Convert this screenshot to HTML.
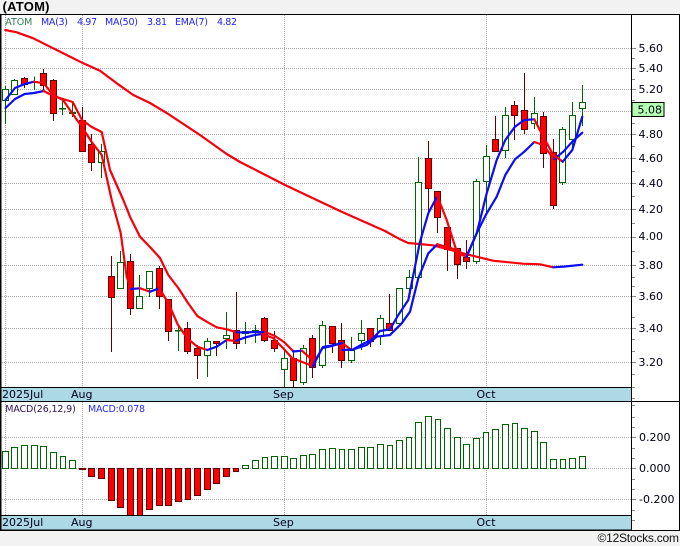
<!DOCTYPE html>
<html><head><meta charset="utf-8"><style>
html,body{margin:0;padding:0;background:#f2f2f2;width:680px;height:546px;overflow:hidden}
svg{display:block}
text{font-family:"DejaVu Sans",sans-serif;font-size:11px;fill:#000018}
.l text{font-size:9.5px}
.g{fill:#fff;stroke:#006400;stroke-width:1}
.d{fill:#006400;stroke:#006400;stroke-width:1}
.r{fill:#f00;stroke:#660000;stroke-width:1}
.red{fill:none;stroke:#f5000c;stroke-width:2.2;stroke-linejoin:round;stroke-linecap:round}
.blu{fill:none;stroke:#0c0cf5;stroke-width:2.2;stroke-linejoin:round;stroke-linecap:round}
.grid{stroke:#a8a8a8;stroke-width:1;stroke-dasharray:1 1;fill:none}
.tick{stroke:#888;stroke-width:1;fill:none}
</style></head><body>
<svg width="680" height="546" viewBox="0 0 680 546" xmlns="http://www.w3.org/2000/svg">
<rect x="0" y="0" width="680" height="546" fill="#f2f2f2"/>
<rect x="0" y="14" width="680" height="516" fill="#fff"/>
<text x="2.5" y="11" textLength="47" style="font-family:'Liberation Sans',sans-serif;font-size:13px;font-weight:bold;fill:#000">(ATOM)</text>

<!-- grid -->
<path class="grid" d="M2 48.5H632M2 68.5H632M2 89.5H632M2 111.5H632M2 134.5H632M2 158.5H632M2 183.5H632M2 209.5H632M2 237.5H632M2 265.5H632M2 296.5H632M2 328.5H632M2 362.5H632M5.5 15V387M82.5 15V387M284.5 15V387M486.5 15V387M2 437.5H632M2 468.5H632M2 499.5H632M5.5 402V515M82.5 402V515M284.5 402V515M486.5 402V515"/>

<!-- candles -->
<path class="g" d="M5.5 86V89.5M5.5 100.5V124M2.5 89.5h6V100.5h-6z"/>
<path class="g" d="M14.5 79V80.5M11.5 80.5h6V94.5h-6z"/>
<path class="r" d="M24.5 77V78.5M24.5 84.5V88M21.5 78.5h6V84.5h-6z"/>
<path class="g" d="M34.5 76.5V81.5M34.5 82.5V90M31.5 81.5h6V82.5h-6z"/>
<path class="r" d="M43.5 69V73.5M43.5 85.5V90M40.5 73.5h6V85.5h-6z"/>
<path class="r" d="M53.5 79V80.5M53.5 113.5V121M50.5 80.5h6V113.5h-6z"/>
<path class="d" d="M62.5 101V108.5M62.5 109V115M59.5 108.5h6V109h-6z"/>
<path class="g" d="M72.5 103V112.5M72.5 113.5V117M69.5 112.5h6V113.5h-6z"/>
<path class="r" d="M82.5 107V120.5M79.5 120.5h6V151.5h-6z"/>
<path class="r" d="M91.5 134V144.5M91.5 162.5V171M88.5 144.5h6V162.5h-6z"/>
<path class="g" d="M101.5 144V151.5M101.5 162.5V178M98.5 151.5h6V162.5h-6z"/>
<path class="r" d="M111.5 256V276.5M111.5 297.5V352M108.5 276.5h6V297.5h-6z"/>
<path class="g" d="M120.5 251V262.5M117.5 262.5h6V288.5h-6z"/>
<path class="r" d="M130.5 254V261.5M130.5 308.5V315M127.5 261.5h6V308.5h-6z"/>
<path class="g" d="M139.5 275V296.5M136.5 296.5h6V308.5h-6z"/>
<path class="g" d="M149.5 288.5V297M146.5 271.5h6V288.5h-6z"/>
<path class="r" d="M159.5 266V268.5M159.5 296.5V309M156.5 268.5h6V296.5h-6z"/>
<path class="r" d="M168.5 331.5V341M165.5 299.5h6V331.5h-6z"/>
<path class="d" d="M178.5 326V330.5M178.5 331V351M175.5 330.5h6V331h-6z"/>
<path class="r" d="M187.5 322V328.5M187.5 351.5V354M184.5 328.5h6V351.5h-6z"/>
<path class="r" d="M197.5 345V348.5M197.5 355.5V379M194.5 348.5h6V355.5h-6z"/>
<path class="g" d="M207.5 338V341.5M207.5 355.5V377M204.5 341.5h6V355.5h-6z"/>
<path class="r" d="M216.5 343.5V356M213.5 341.5h6V343.5h-6z"/>
<path class="g" d="M226.5 312V335.5M226.5 338.5V349M223.5 335.5h6V338.5h-6z"/>
<path class="r" d="M236.5 292V330.5M236.5 343.5V349M233.5 330.5h6V343.5h-6z"/>
<path class="g" d="M245.5 322V331.5M245.5 333.5V344M242.5 331.5h6V333.5h-6z"/>
<path class="g" d="M255.5 325V330.5M255.5 332.5V343M252.5 330.5h6V332.5h-6z"/>
<path class="r" d="M264.5 317V318.5M264.5 340.5V342M261.5 318.5h6V340.5h-6z"/>
<path class="r" d="M274.5 331V340.5M274.5 348.5V352M271.5 340.5h6V348.5h-6z"/>
<path class="g" d="M284.5 350V358.5M284.5 369.5V387M281.5 358.5h6V369.5h-6z"/>
<path class="r" d="M293.5 350V358.5M293.5 380.5V388M290.5 358.5h6V380.5h-6z"/>
<path class="g" d="M303.5 345V348.5M303.5 382.5V385M300.5 348.5h6V382.5h-6z"/>
<path class="r" d="M312.5 335V338.5M312.5 367.5V378M309.5 338.5h6V367.5h-6z"/>
<path class="g" d="M322.5 321V325.5M322.5 365.5V368M319.5 325.5h6V365.5h-6z"/>
<path class="r" d="M332.5 343.5V353M329.5 326.5h6V343.5h-6z"/>
<path class="r" d="M341.5 323V340.5M341.5 360.5V368M338.5 340.5h6V360.5h-6z"/>
<path class="g" d="M351.5 337V350.5M351.5 360.5V363M348.5 350.5h6V360.5h-6z"/>
<path class="g" d="M361.5 320V333.5M361.5 340.5V350M358.5 333.5h6V340.5h-6z"/>
<path class="r" d="M370.5 341.5V347M367.5 328.5h6V341.5h-6z"/>
<path class="g" d="M380.5 315V318.5M380.5 336.5V345M377.5 318.5h6V336.5h-6z"/>
<path class="r" d="M389.5 294V323.5M386.5 323.5h6V330.5h-6z"/>
<path class="g" d="M396.5 288.5h6V323.5h-6z"/>
<path class="g" d="M409.5 270V277.5M409.5 288.5V298M406.5 277.5h6V288.5h-6z"/>
<path class="g" d="M418.5 157V182.5M415.5 182.5h6V277.5h-6z"/>
<path class="r" d="M428.5 141V158.5M428.5 188.5V212M425.5 158.5h6V188.5h-6z"/>
<path class="r" d="M437.5 217.5V233M434.5 191.5h6V217.5h-6z"/>
<path class="r" d="M447.5 249.5V271M444.5 227.5h6V249.5h-6z"/>
<path class="r" d="M457.5 264.5V279M454.5 248.5h6V264.5h-6z"/>
<path class="r" d="M466.5 240V257.5M466.5 261.5V269M463.5 257.5h6V261.5h-6z"/>
<path class="g" d="M476.5 179V181.5M476.5 261.5V264M473.5 181.5h6V261.5h-6z"/>
<path class="g" d="M486.5 145V156.5M486.5 181.5V213M483.5 156.5h6V181.5h-6z"/>
<path class="r" d="M495.5 116V139.5M492.5 139.5h6V151.5h-6z"/>
<path class="g" d="M505.5 107V115.5M505.5 150.5V158M502.5 115.5h6V150.5h-6z"/>
<path class="r" d="M514.5 101V105.5M514.5 115.5V140M511.5 105.5h6V115.5h-6z"/>
<path class="r" d="M524.5 73V110.5M524.5 129.5V134M521.5 110.5h6V129.5h-6z"/>
<path class="g" d="M534.5 97V113.5M534.5 123.5V129M531.5 113.5h6V123.5h-6z"/>
<path class="r" d="M543.5 112V116.5M543.5 153.5V168M540.5 116.5h6V153.5h-6z"/>
<path class="r" d="M553.5 139V152.5M553.5 205.5V209M550.5 152.5h6V205.5h-6z"/>
<path class="g" d="M562.5 127V129.5M562.5 182.5V185M559.5 129.5h6V182.5h-6z"/>
<path class="g" d="M572.5 102V115.5M572.5 139.5V150M569.5 115.5h6V139.5h-6z"/>
<path class="g" d="M582.5 85V102.5M582.5 108.5V126M579.5 102.5h6V108.5h-6z"/>

<!-- MA50 -->
<polyline class="red" points="5.3,30 16.7,32.3 33.3,38.3 50,46.7 66.7,55 83.3,63.3 100,70.7 116.7,83.3 133.3,95 150,103 166.7,113 200,135 226.7,154 240,162 285,185 340,211 385,231 400,239.3 408.3,243 433,245.3 466.7,254.3 493,260.7 523,263.7 540,264.3 553.3,267.3"/>
<polyline class="blu" points="553.3,267.3 565,266.5 582.3,264.7"/>

<!-- EMA7 -->
<polyline class="blu" points="5.5,108 15,99 24.7,94 34,93 43.7,91"/>
<polyline class="red" points="43.7,91 53.3,96 63,99 72.7,102 82,120 91.7,127 101.7,132 110,170 123.3,200 130,216.7 140,236.7 150,247 160,258 168.3,275 178.3,288 188,303 197.3,316 206.7,321.7 216.7,327.3 226.7,329.3 236.5,332.3"/>
<polyline class="blu" points="236.5,332.3 245,332.5 255,332 265,332"/>
<polyline class="red" points="265,332 275,336 284,342 293,351"/>
<polyline class="blu" points="293,351.5 302,350.7"/>
<polyline class="red" points="302,350.7 310,358 313,363"/>
<polyline class="blu" points="313,366 322.3,348 332,346 342,343"/>
<polyline class="red" points="342,343 351.5,350"/>
<polyline class="blu" points="351.5,350 366.7,345 376.7,336.7 390,335 401.7,323.3 410,311.7 418.3,278.3 428.3,253.3 437.3,244.3"/>
<polyline class="red" points="437.3,244.3 447,247 457.3,250 466.7,256.7"/>
<polyline class="blu" points="468,253 476.7,233.3 486.7,213.3 496.7,196.7 505.3,175 515,159.3 524.3,151.7 534.3,142"/>
<polyline class="red" points="534.3,142 543.3,145 553.3,158.3"/>
<polyline class="blu" points="554.3,159 563.3,151.7 572.3,141.7 582.3,132.7"/>

<!-- MA3 -->
<polyline class="blu" points="5.5,100 15,88 24.7,84 34,81.7"/>
<polyline class="red" points="34,81.7 43.7,83.3 53.3,95 63,100 72.7,114 82,127 91.7,142 101.7,155 111.7,200 120.7,233 126.7,277 131.3,289"/>
<polyline class="blu" points="131.3,289 140,288.3"/>
<polyline class="red" points="140,288.3 150,291.7"/>
<polyline class="blu" points="150,291.7 159.3,288.3"/>
<polyline class="red" points="159.3,288.3 168.3,303 178,325 187.3,338.3 197.3,346.7 207.3,350"/>
<polyline class="blu" points="207.3,350 216.7,346.7 226.7,340"/>
<polyline class="red" points="226.7,340 236.5,341"/>
<polyline class="blu" points="236.5,340.7 245,337.5 255,335 262,334"/>
<polyline class="red" points="262,334 273,338 283,348 292,358 310,365"/>
<polyline class="blu" points="313,366.7 316.7,358 323,347 332,345.5 342,343"/>
<polyline class="blu" points="342.5,350 353,349.5 361,345 371,340 380,331 390,329.3 398.3,315 408.3,300 412.7,278 420,241.7 428.3,213.3 437.3,196"/>
<polyline class="red" points="437.3,196 446.7,220 457.3,253.3 466.7,256.7"/>
<polyline class="blu" points="466.7,256.7 476.7,233.3 486.7,193.3 496.7,160 505.3,140 515,126.7 524.3,120 534.3,119.3"/>
<polyline class="red" points="534.3,119.3 543.3,136.7 553.3,155 562.7,161.7"/>
<polyline class="blu" points="562.7,161.7 572.3,150 582.3,116.7"/>

<!-- MACD histogram -->
<g class="g" fill="#fff" stroke="#006400">
<rect x="2.5" y="451.5" width="6" height="17"/><rect x="11.5" y="447.5" width="6" height="21"/><rect x="21.5" y="445.5" width="6" height="23"/><rect x="31.5" y="445.5" width="6" height="23"/><rect x="40.5" y="446.5" width="6" height="22"/><rect x="50.5" y="452.5" width="6" height="16"/><rect x="60.5" y="456.5" width="5" height="12"/><rect x="69.5" y="460.5" width="6" height="8"/>
<rect x="242.5" y="465.5" width="6" height="3"/><rect x="252.5" y="460.5" width="6" height="8"/><rect x="262.5" y="457.5" width="5" height="11"/><rect x="271.5" y="456.5" width="6" height="12"/><rect x="281.5" y="456.5" width="6" height="12"/><rect x="290.5" y="458.5" width="6" height="10"/><rect x="300.5" y="455.5" width="6" height="13"/><rect x="309.5" y="454.5" width="6" height="14"/><rect x="319.5" y="449.5" width="6" height="19"/><rect x="329.5" y="448.5" width="6" height="20"/><rect x="339.5" y="449.5" width="5" height="19"/><rect x="348.5" y="449.5" width="6" height="19"/><rect x="358.5" y="447.5" width="6" height="21"/><rect x="367.5" y="447.5" width="6" height="21"/><rect x="377.5" y="444.5" width="6" height="24"/><rect x="387.5" y="445.5" width="5" height="23"/><rect x="396.5" y="440.5" width="6" height="28"/><rect x="406.5" y="437.5" width="5" height="31"/><rect x="415.5" y="422.5" width="6" height="46"/><rect x="425.5" y="416.5" width="6" height="52"/><rect x="435.5" y="419.5" width="5" height="49"/><rect x="444.5" y="428.5" width="6" height="40"/><rect x="454.5" y="437.5" width="6" height="31"/><rect x="463.5" y="444.5" width="6" height="24"/><rect x="473.5" y="438.5" width="6" height="30"/><rect x="483.5" y="432.5" width="5" height="36"/><rect x="492.5" y="429.5" width="6" height="39"/><rect x="502.5" y="424.5" width="6" height="44"/><rect x="512.5" y="423.5" width="5" height="45"/><rect x="521.5" y="428.5" width="6" height="40"/><rect x="531.5" y="431.5" width="6" height="37"/><rect x="540.5" y="442.5" width="6" height="26"/><rect x="550.5" y="459.5" width="6" height="9"/><rect x="560.5" y="459.5" width="5" height="9"/><rect x="569.5" y="458.5" width="6" height="10"/><rect x="579.5" y="456.5" width="6" height="12"/>
</g>
<g fill="#f00" stroke="#660000" stroke-width="1">
<rect x="79.5" y="468.5" width="6" height="1"/><rect x="88.5" y="468.5" width="6" height="8"/><rect x="98.5" y="468.5" width="6" height="10"/><rect x="108.5" y="468.5" width="6" height="32"/><rect x="117.5" y="468.5" width="6" height="39"/><rect x="127.5" y="468.5" width="6" height="47"/><rect x="137.5" y="468.5" width="5" height="47"/><rect x="146.5" y="468.5" width="6" height="41"/><rect x="156.5" y="468.5" width="6" height="37"/><rect x="165.5" y="468.5" width="6" height="37"/><rect x="175.5" y="468.5" width="6" height="33"/><rect x="185.5" y="468.5" width="5" height="31"/><rect x="194.5" y="468.5" width="6" height="27"/><rect x="204.5" y="468.5" width="6" height="21"/><rect x="213.5" y="468.5" width="6" height="15"/><rect x="223.5" y="468.5" width="6" height="8"/><rect x="233.5" y="468.5" width="5" height="3"/>
</g>

<!-- bands -->
<rect x="1" y="387.5" width="630.5" height="14" fill="#add8e6" stroke="#000" stroke-width="1"/>
<rect x="1" y="515.5" width="630.5" height="14.5" fill="#add8e6" stroke="#000" stroke-width="1"/>
<text x="2" y="398">2025Jul</text><text x="71" y="398">Aug</text><text x="273" y="398">Sep</text><text x="476.5" y="398">Oct</text>
<text x="2" y="526">2025Jul</text><text x="71" y="526">Aug</text><text x="273" y="526">Sep</text><text x="476.5" y="526">Oct</text>

<!-- frame -->
<path d="M0 14.5H680M0.5 14V530M679.5 14V530M631.5 14V530M0 401.5H680M0 530.5H680" stroke="#000" stroke-width="1" fill="none"/>
<rect x="0" y="14" width="1.5" height="516" fill="#000"/>

<!-- ticks -->
<path class="tick" d="M632 48.5h4M632 58.5h3M632 68.5h4M632 79.5h3M632 89.5h4M632 100.5h3M632 123.5h3M632 134.5h4M632 146.5h3M632 158.5h4M632 171.5h3M632 183.5h4M632 196.5h3M632 209.5h4M632 223.5h3M632 237.5h4M632 251.5h3M632 265.5h4M632 277.5h3M632 286.5h3M632 296.5h4M632 317.5h3M632 328.5h4M632 339.5h3M632 351.5h3M632 362.5h4M632 374.5h3M632 387.5h3M632 398.5h3M632 405.5h3M632 417.5h3M632 427.5h3M632 437.5h4M632 448.5h3M632 458.5h3M632 468.5h4M632 479.5h3M632 489.5h3M632 499.5h4M632 510.5h3M632 520.5h3"/>

<!-- axis labels -->
<text x="638.5" y="52">5.60</text><text x="638.5" y="72">5.40</text><text x="638.5" y="93">5.20</text>
<rect x="632" y="102.5" width="32" height="14" fill="#b4ffb4" stroke="#000" stroke-width="1"/>
<text x="637.5" y="113.5">5.08</text>
<text x="638.5" y="138">4.80</text><text x="638.5" y="162">4.60</text><text x="638.5" y="187">4.40</text><text x="638.5" y="213">4.20</text><text x="638.5" y="240">4.00</text><text x="638.5" y="269">3.80</text><text x="638.5" y="300">3.60</text><text x="638.5" y="332">3.40</text><text x="638.5" y="366">3.20</text>
<text x="639" y="441">0.200</text><text x="639" y="472">0.000</text><text x="639" y="503">-0.200</text>

<!-- legends -->
<g class="l">
<text x="5.3" y="25" textLength="27" style="fill:#2f7d4f">ATOM</text>
<text x="41" y="25" textLength="27" style="fill:#2222ee">MA(3)</text><text x="77" y="25" textLength="20" style="fill:#2222ee">4.97</text>
<text x="105" y="25" textLength="33" style="fill:#2222ee">MA(50)</text><text x="147" y="25" textLength="20" style="fill:#2222ee">3.81</text>
<text x="175" y="25" textLength="33" style="fill:#2222ee">EMA(7)</text><text x="217" y="25" textLength="20" style="fill:#2222ee">4.82</text>
<text x="5.3" y="412" textLength="70.5" style="fill:#301050">MACD(26,12,9)</text>
<text x="88" y="412" textLength="57" style="fill:#2a2af0">MACD:0.078</text>
</g>
<text x="597.5" y="542" textLength="81.5" style="font-family:'Liberation Sans',sans-serif;font-size:12px;fill:#111">©12Stocks.com</text>
</svg>
</body></html>
